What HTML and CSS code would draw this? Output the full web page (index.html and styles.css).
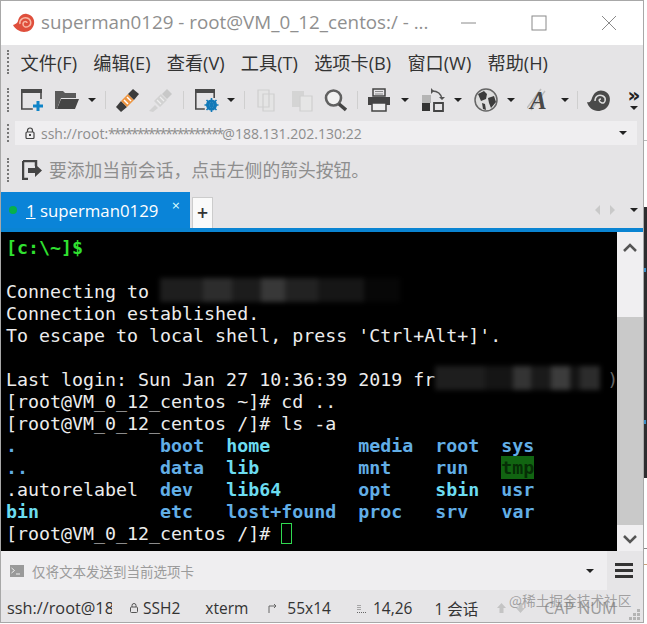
FILE: index.html
```html
<!DOCTYPE html>
<html lang="zh">
<head>
<meta charset="utf-8">
<title>superman0129</title>
<link rel="stylesheet" href="styles.css">
</head>
<body>
<div class="backdrop"><i class="bd-line"></i><i class="bd-dark"><b class="bd-dot d1"></b><b class="bd-dot d2"></b></i><i class="bd-box"></i></div>
<div class="window">
  <header class="titlebar">
    <svg class="app-icon" width="22" height="20" viewBox="0 0 22 20"><path d="M0 12c2-1 4-1 5-4 1-5 5-8 9-7 5 1 8 5 7 10-1 5-5 8-10 8-4 0-9-3-11-7z" fill="#df4f3c"/><path d="M7 11c-1-4 3-7 7-6s5 6 2 8-6 1-6-2 4-3 4-1" fill="none" stroke="#f8b9a6" stroke-width="1.500"/></svg>
    <span class="title">superman0129 - root@VM_0_12_centos:/ - ...</span>
    <div class="winctl">
      <svg width="16" height="16" viewBox="0 0 16 16"><path d="M0 8h15" stroke="#8a8a8a"/></svg>
      <svg width="16" height="16" viewBox="0 0 16 16"><rect x="1" y="1" width="14" height="14" fill="none" stroke="#8a8a8a"/></svg>
      <svg width="16" height="16" viewBox="0 0 16 16"><path d="M1 1l14 14M15 1L1 15" stroke="#8a8a8a"/></svg>
    </div>
  </header>

  <div class="chrome">
    <nav class="menubar">
      <span class="grip"></span>
      <span>文件(F)</span><span>编辑(E)</span><span>查看(V)</span><span>工具(T)</span><span>选项卡(B)</span><span>窗口(W)</span><span>帮助(H)</span>
    </nav>

    <div class="toolbar">
      <span class="grip"></span>
      <svg class="ic m11" viewBox="0 0 24 24"><path d="M1 1h21v4H1z" fill="#4a4a4a"/><path d="M1.800 3v18h11M21 3v8" fill="none" stroke="#4a4a4a" stroke-width="1.600"/><path d="M18 13v10M13 18h10" stroke="#0f84c8" stroke-width="3"/></svg>
      <svg class="ic" viewBox="0 0 24 24"><path d="M0 3h8l2 2h11v5H6L2 21H0z" fill="#5a5a5a"/><path d="M6 11h18l-4 10H2z" fill="#444"/></svg>
      <i class="caret"></i><i class="sep"></i>
      <svg class="ic" viewBox="0 0 24 24"><path d="M1 19l5-6 6 6-6 5z" fill="#3c3c3c"/><path d="M6 13l7-7 6 6-7 7z" fill="#ed9440"/><path d="M9 12l4 4M12 9l4 4" stroke="#fff" stroke-width="1.500"/><path d="M13 6l5-5 6 5-5 6z" fill="#3c3c3c"/></svg>
      <svg class="ic m11" viewBox="0 0 24 24"><path d="M1 23l6-6 3 3-5 4zM6 13l7-7 6 6-7 7z" fill="#d2d2d2"/><path d="M14 6l5-5 5 5-5 5z" fill="#c8c8c8"/><path d="M9 12l4 4M12 9l4 4" stroke="#eee" stroke-width="1.200"/></svg>
      <i class="sep m11"></i>
      <svg class="ic m8" viewBox="0 0 24 24"><path d="M0 1h20v4H0z" fill="#4a4a4a"/><path d="M.8 3v18h9M19.200 3v7" fill="none" stroke="#4a4a4a" stroke-width="1.600"/><circle cx="16.500" cy="17" r="4" fill="none" stroke="#1279b8" stroke-width="3"/><path d="M16.500 10v14M9.500 17h14M11.500 12l10 10M21.500 12l-10 10" stroke="#1279b8" stroke-width="1.600"/></svg>
      <i class="caret"></i><i class="sep m10"></i>
      <svg class="ic m11" viewBox="0 0 24 24"><path d="M3 2h11v17H3zM8 6h11v17H8z" fill="#e4e4e4" stroke="#cfcfcf" stroke-width="1.200"/></svg>
      <svg class="ic" viewBox="0 0 24 24"><path d="M2 3h12v16H2z" fill="#d4d4d4"/><path d="M10 8h12v15H10z" fill="#e6e6e6" stroke="#cfcfcf" stroke-width="1.200"/></svg>
      <svg class="ic m10" viewBox="0 0 24 24"><circle cx="10.500" cy="10" r="7.500" fill="#f2f2f2" stroke="#616161" stroke-width="2.600"/><path d="M16 16l7 6" stroke="#444" stroke-width="3.500"/></svg>
      <i class="sep"></i>
      <svg class="ic m10" viewBox="0 0 24 24"><path d="M6 1h12v7H6z" fill="none" stroke="#444" stroke-width="1.500"/><path d="M8 3.500h8M8 6h8" stroke="#888"/><path d="M1 9h22v8H1z" fill="#444"/><path d="M5 15h14v8H5z" fill="#eee" stroke="#444" stroke-width="1.500"/></svg>
      <i class="caret m12"></i>
      <svg class="ic" viewBox="0 0 24 24"><path d="M1 7h9v8H1z" fill="#b5b5b5"/><path d="M1 15h8v8H1z" fill="#333"/><path d="M13 15h9v8h-9z" fill="none" stroke="#444" stroke-width="1.800"/><path d="M11 3c5 0 9 2 10 8" fill="none" stroke="#555" stroke-width="1.500"/><path d="M10 0v6l3-3zM18 9h6l-3 3z" fill="#555"/></svg>
      <i class="caret m12"></i>
      <svg class="ic" viewBox="0 0 24 24"><circle cx="12" cy="12" r="11" fill="#ddd" stroke="#666" stroke-width="1.500"/><path d="M4 6l6-3 3 3-1 5-5 2zM14 10l6-2 2 6-5 6-2-5zM8 15l3 1 1 6-3-1z" fill="#3c3c3c"/></svg>
      <i class="caret m12"></i>
      <div class="font-ic m10">
        <svg class="font-lines" width="24" height="24" viewBox="0 0 24 24"><path d="M0 20L14 1M4 22L18 3" stroke="#bdbdbd" stroke-width="1.500"/></svg>
        <span class="font-a">A</span>
      </div>
      <i class="caret m8"></i><i class="sep"></i>
      <svg class="ic m16" viewBox="0 0 24 24"><path d="M0 14c3 1 4-1 5-4 2-6 7-9 12-7 6 2 7 8 5 13-2 5-7 7-11 7-5 0-10-4-11-9z" fill="#4a4a4a"/><path d="M8 13c0-5 4-7 8-5s2 8-1 7-4-4-1-4" fill="none" stroke="#ddd" stroke-width="1.500"/></svg>
      <div class="overflow">
        <span>»</span>
        <i class="caret"></i>
      </div>
    </div>

    <div class="address">
      <span class="grip short"></span>
      <div class="field">
        <svg class="lock" width="10" height="12" viewBox="0 0 10 12"><path d="M2.500 5V3.500a2.500 2.500 0 0 1 5 0V5" fill="none" stroke="#444" stroke-width="1.200"/><rect x="1" y="5" width="8" height="6.500" rx="1" fill="none" stroke="#444" stroke-width="1.200"/><rect x="4" y="7" width="2" height="2" fill="#444"/></svg>
        <span class="url">ssh://root:<span class="stars">********************</span>@188.131.202.130:22</span>
        <i class="caret tiny"></i>
      </div>
    </div>

    <div class="tipbar">
      <span class="grip"></span>
      <svg class="tip-ic" width="20" height="20" viewBox="0 0 20 20"><path d="M1 1h13v5M1 1v18h5" fill="none" stroke="#444" stroke-width="2.500"/><path d="M6 8h7V4l7 6.500-7 6.500v-4H6z" fill="#444"/></svg>
      <span class="tip-text">要添加当前会话，点击左侧的箭头按钮。</span>
    </div>

    <div class="tabs">
      <div class="tab">
        <i class="dot"></i>
        <span class="tab-label"><u>1</u> superman0129</span>
        <span class="tab-close">×</span>
      </div>
      <button class="tab-add">+</button>
      <div class="tab-nav">
        <i class="tri left"></i><i class="tri right"></i><i class="caret"></i>
      </div>
    </div>
  </div>

  <main class="terminal">
<pre class="screen"><span class="prompt">[c:\~]$</span>

Connecting to <span class="blur b1"></span>
Connection established.
To escape to local shell, press 'Ctrl+Alt+]'.

Last login: Sun Jan 27 10:36:39 2019 fr<span class="blur b2"></span><span class="paren">)</span>
[root@VM_0_12_centos ~]# cd ..
[root@VM_0_12_centos /]# ls -a
<b class="dir">.</b>             <b class="dir">boot</b>  <b class="cy">home</b>        <b class="dir">media</b>  <b class="dir">root</b>  <b class="dir">sys</b>
<b class="dir">..</b>            <b class="dir">data</b>  <b class="cy">lib</b>         <b class="dir">mnt</b>    <b class="dir">run</b>   <b class="tmp">tmp</b>
.autorelabel  <b class="dir">dev</b>   <b class="cy">lib64</b>       <b class="dir">opt</b>    <b class="cy">sbin</b>  <b class="dir">usr</b>
<b class="cy">bin</b>           <b class="dir">etc</b>   <b class="dir">lost+found</b>  <b class="dir">proc</b>   <b class="dir">srv</b>   <b class="dir">var</b>
[root@VM_0_12_centos /]# <i class="cursor"></i></pre>
    <div class="scrollbar">
      <svg width="14" height="10" viewBox="0 0 14 10"><path d="M1 8l6-6 6 6" fill="none" stroke="#555" stroke-width="2.500"/></svg>
      <div class="track"><div class="thumb"></div></div>
      <svg width="14" height="10" viewBox="0 0 14 10"><path d="M1 2l6 6 6-6" fill="none" stroke="#555" stroke-width="2.500"/></svg>
    </div>
  </main>

  <div class="sendbar">
    <div class="sendfield">
      <svg width="14" height="12" viewBox="0 0 14 12"><rect width="14" height="12" fill="#9a9a9a"/><path d="M1.500 3l3 2.500-3 2.500M6 9h4" fill="none" stroke="#eee"/></svg>
      <span class="send-text">仅将文本发送到当前选项卡</span>
      <i class="caret tiny"></i>
    </div>
    <div class="hamburger"><i></i><i></i><i></i></div>
  </div>

  <footer class="statusbar">
    <span class="st st-conn">ssh://root@18</span>
    <span class="st st-ssh"><svg width="8" height="10" viewBox="0 0 8 10"><path d="M2 4V2.500a2 2 0 0 1 4 0V4" fill="none" stroke="#555"/><rect x=".5" y="4" width="7" height="5.500" rx="1" fill="none" stroke="#555"/></svg>SSH2</span>
    <span class="st st-term">xterm</span>
    <span class="st st-size"><svg width="9" height="9" viewBox="0 0 9 9"><path d="M1 9V2h7M6 0l2 2-2 2" fill="none" stroke="#666"/></svg>55x14</span>
    <span class="st st-pos"><svg width="9" height="9" viewBox="0 0 9 9"><path d="M0 8.500h9M1 1v5M3 1v5" stroke="#666" stroke-dasharray="1 1"/></svg>14,26</span>
    <span class="st st-sess">1 会话</span>
    <span class="arrows">
      <svg width="9" height="10" viewBox="0 0 9 10"><path d="M4.500 0L9 5H6.500v5h-4V5H0z" fill="#c4c4c4"/></svg>
      <svg width="9" height="10" viewBox="0 0 9 10"><path d="M4.500 10L9 5H6.500V0h-4v5H0z" fill="#c4c4c4"/></svg>
    </span>
    <span class="st st-cap">CAP NUM</span>
    <span class="watermark">@稀土掘金技术社区</span>
    <svg class="resize" width="12" height="12" viewBox="0 0 12 12"><path d="M8 0h3v3H8zM4 4h3v3H4zM8 4h3v3H8zM0 8h3v3H0zM4 8h3v3H4zM8 8h3v3H8z" fill="#b4b4b4"/></svg>
  </footer>
</div>
</body>
</html>
```
FILE: styles.css
```css
* { box-sizing: border-box; }
html, body { margin: 0; padding: 0; background: #fff; }
body { width: 647px; height: 624px; overflow: hidden; position: relative; font-family: "Liberation Sans", "Noto Sans CJK SC", sans-serif; }

.backdrop { position: absolute; left: 644px; top: 0; width: 3px; height: 624px; }
.backdrop i { position: absolute; left: 0; right: 0; display: block; }
.bd-line { top: 140px; height: 1px; background: #bbb; }
.bd-dark { top: 207px; height: 271px; background: #2d2d2f; }
.bd-dot { position: absolute; left: 0; width: 2px; height: 4px; background: #3a8cc4; }
.d1 { top: 61px; }
.d2 { top: 213px; }
.bd-box { top: 548px; height: 17px; border-top: 1px solid #888; border-bottom: 1px solid #c9a27c; }

.window { width: 644px; height: 623px; border: 1px solid #a8a8a8; display: flex; flex-direction: column; background: #e6e5e7; }

.titlebar { height: 44px; flex: none; background: #fff; display: flex; align-items: center; padding: 0 0 2px 12px; }
.app-icon { flex: none; margin-top: 2px; }
.title { margin-left: 6px; font: 18.800px "Open Sans", "Noto Sans CJK SC", sans-serif; color: #8f8f8f; white-space: nowrap; }
.winctl { margin-left: auto; display: flex; gap: 54px; padding: 2px 26px 0 0; align-items: center; }

.chrome { height: 187px; flex: none; display: flex; flex-direction: column; background: #e5e4e6; }

.grip { flex: none; width: 2px; height: 24px; border-left: 2px dotted #777; }
.grip.short { height: 18px; }

.menubar { height: 35px; flex: none; display: flex; align-items: center; padding: 0 0 1px 6px; font: 18.200px "Open Sans", "Noto Sans CJK SC", sans-serif; color: #333; gap: 16.200px; white-space: nowrap; }
.menubar .grip { margin-right: -4.600px; }

.toolbar { height: 39px; flex: none; display: flex; align-items: center; padding-left: 6px; }
.toolbar .grip { margin-right: 11px; }
.ic { width: 24px; height: 24px; flex: none; margin-right: 9px; }

.font-ic { position: relative; flex: none; width: 24px; height: 24px; }
.font-lines { display: block; }
.font-a { position: absolute; left: 3px; top: 0; font: italic bold 25px/25px "Liberation Serif", serif; color: #484848; }

.caret { display: block; flex: none; width: 0; height: 0; border: 4px solid transparent; border-top: 4px solid #222; border-bottom: 0; margin-right: 9px; }
.caret.tiny { margin: 0; }
.sep { display: block; flex: none; width: 1px; height: 18px; background: #cfcfcf; margin-right: 9px; }
.m8 { margin-right: 8px; }
.m10 { margin-right: 10px; }
.m11 { margin-right: 11px; }
.m12 { margin-right: 12px; }
.m16 { margin-right: 16px; }

.overflow { display: flex; flex-direction: column; align-items: center; width: 14px; font: bold 20px/12px "DejaVu Sans", sans-serif; color: #222; gap: 3px; }
.overflow span { display: block; height: 14px; }
.overflow .caret { margin: 0; }

.address { height: 30px; flex: none; display: flex; align-items: center; padding: 0 0 2px 6px; }
.field { margin-left: 6px; width: 622px; height: 24px; background: #efeef0; display: flex; align-items: center; padding: 0 10px 0 10px; }
.url { margin-left: 6px; font: 14px "Open Sans", sans-serif; color: #8d8d8d; white-space: nowrap; flex: 1; }
.stars { letter-spacing: -2px; }

.tipbar { height: 43px; flex: none; display: flex; align-items: center; padding: 0 0 2px 6px; }
.tip-ic { margin-left: 13px; }
.tip-text { margin: 0 0 2px 7px; font: 17.800px "Noto Sans CJK SC", sans-serif; color: #8e8e8e; white-space: nowrap; }

.tabs { flex: 1; display: flex; align-items: stretch; border-bottom: 4px solid #0a84d2; }
.tab { width: 189px; background: #0a84d8; display: flex; align-items: center; padding-left: 8px; color: #fff; }
.dot { width: 8px; height: 8px; border-radius: 50%; background: #07b04b; flex: none; }
.tab-label { margin-left: 9px; font: 16.800px "Open Sans", sans-serif; white-space: nowrap; }
.tab-close { margin-left: 13px; font: 11px/12px "DejaVu Sans", sans-serif; align-self: flex-start; margin-top: 8px; color: #dff; }
.tab-add { width: 21px; height: 31px; margin: 5px 0 0 2px; padding: 0; background: #fafafa; border: 1px solid #ccc; border-bottom: 0; font: bold 15px "DejaVu Sans", sans-serif; color: #333; }
.tab-nav { margin-left: auto; display: flex; align-items: center; gap: 10px; padding-right: 5px; }
.tab-nav .caret { margin: 0 0 0 5px; }
.tri { display: block; width: 0; height: 0; border-style: solid; border-color: transparent; border-width: 5px 0; }
.tri.left { border-right: 5px solid #c9c9c9; }
.tri.right { border-left: 5px solid #c9c9c9; }

.terminal { height: 319px; flex: none; display: flex; background: #000; }
.screen { flex: 1; margin: 0; padding: 5px 0 0 5px; font: 18.300px/22px "DejaVu Sans Mono", monospace; color: #ececec; overflow: hidden; }
.prompt { color: #30e030; font-weight: bold; }
.screen b { font-weight: bold; }
.dir { color: #62aee6; }
.cy { color: #6cdcf0; }
.tmp { color: #062e06; background: #116411; padding: 1px 0; }
.cursor { display: inline-block; width: 11px; height: 21px; margin: -4px 0; border: 1px solid #30d850; vertical-align: baseline; }
.blur { display: inline-block; height: 24px; margin: -4px 0; filter: blur(2.500px); vertical-align: baseline; }
.b1 { width: 240px; background: linear-gradient(90deg, #1e1e1e 0 18%, #2d2d2d 18% 30%, #1c1c1c 30% 42%, #383838 42% 52%, #222 52% 66%, #161616 66% 85%, #070707 85%); }
.b2 { width: 165px; background: linear-gradient(90deg, #1e1e1e 0 30%, #151515 30% 47%, #343434 47% 58%, #1a1a1a 58% 70%, #3c3c3c 70% 82%, #141414 82% 88%, #2c2c2c 88%); }
.paren { margin-left: 7px; color: #666; }

.scrollbar { width: 26px; flex: none; background: #f0eff1; display: flex; flex-direction: column; align-items: center; padding: 11px 0 7px; }
.track { flex: 1; align-self: stretch; display: flex; flex-direction: column; justify-content: flex-end; }
.thumb { height: 208px; background: #c9c9c9; margin-bottom: 9px; }

.sendbar { height: 39px; flex: none; display: flex; background: #e6e5e7; }
.sendfield { width: 606px; background: #efeef0; display: flex; align-items: center; padding: 0 13px 0 9px; }
.send-text { margin-left: 8px; flex: 1; font: 13.500px "Noto Sans CJK SC", sans-serif; color: #9b9b9b; }
.hamburger { flex: 1; display: flex; flex-direction: column; gap: 3px; align-items: center; justify-content: center; padding-right: 2px; }
.hamburger i { display: block; width: 18px; height: 3px; background: #333; }

.statusbar { flex: 1; display: flex; align-items: center; position: relative; font: 15.500px "Open Sans", "Noto Sans CJK SC", sans-serif; color: #333; white-space: nowrap; background: #e6e5e7; padding: 4px 0 0 6px; }
.st { display: flex; align-items: center; flex: none; }
.st-conn { width: 105px; overflow: hidden; font-size: 16.300px; }
.st-ssh { margin-left: 18px; gap: 5px; }
.st-term { margin-left: 25px; }
.st-size { margin-left: 20px; gap: 10px; }
.st-pos { margin-left: 26px; gap: 7px; }
.st-sess { margin-left: 22px; }
.arrows { display: flex; gap: 10px; margin-left: 19px; }
.st-cap { margin-left: 19px; color: #9a9a9a; font-size: 16px; }
.watermark { position: absolute; left: 508px; top: 0; font: 13.700px "Noto Sans CJK SC", sans-serif; color: rgba(120,120,120,.65); }
.resize { position: absolute; right: 2px; bottom: 1px; }
```
